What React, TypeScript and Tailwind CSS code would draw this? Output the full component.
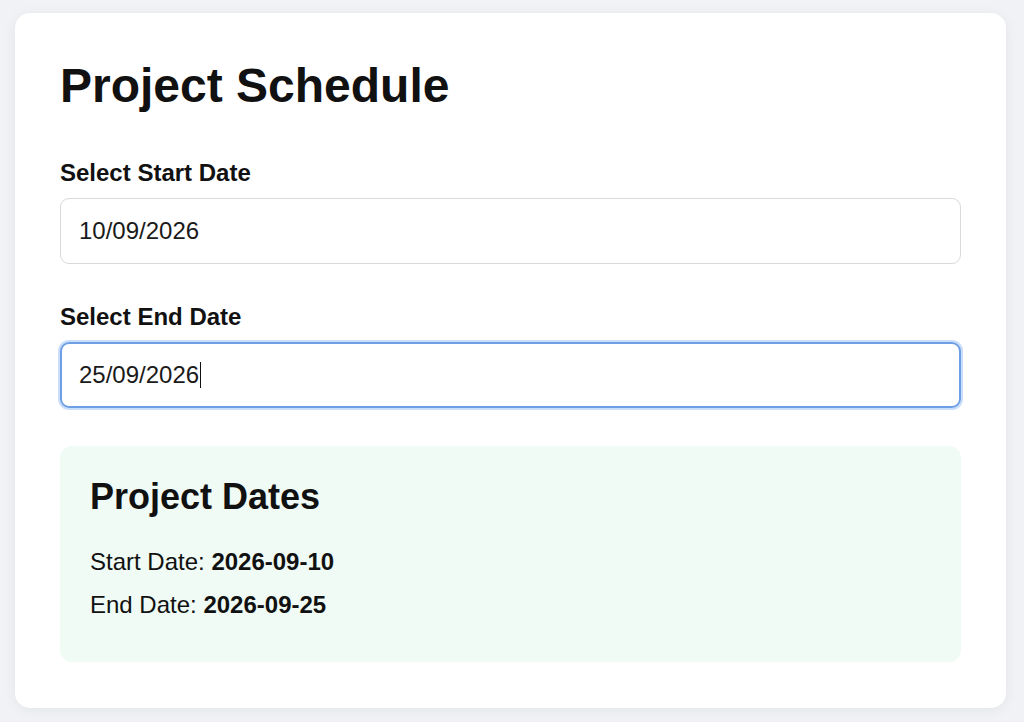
export default function App() {
  return (
    <div className="min-h-[722px] bg-[#f0f2f5] pt-[13px] pb-[14px] font-['Liberation_Sans',Arial,sans-serif] text-[#111]">
      <div className="ml-[15px] w-[991px] rounded-[15px] bg-white px-[45px] pt-[45px] pb-[46px] shadow-[0_2px_14px_rgba(0,0,0,0.06)]">
        <h1 className="mb-[46px] text-[48px] font-bold leading-[55px]">Project Schedule</h1>

        <label className="mb-[12px] block text-[24px] font-bold leading-[27px]">Select Start Date</label>
        <div className="flex h-[66px] items-center rounded-[9px] border-[1.5px] border-[#d9d9d9] px-[18px] text-[24px] text-[#1a1a1a]">
          10/09/2026
        </div>

        <label className="mt-[39px] mb-[12px] block text-[24px] font-bold leading-[27px]">Select End Date</label>
        <div className="flex h-[66px] items-center rounded-[9px] border-2 border-[#6e9ee3] px-[17px] text-[24px] text-[#1a1a1a] shadow-[0_0_0_2px_#c9defa]">
          25/09/2026
          <span className="ml-[1px] inline-block h-[26px] w-[1px] bg-[#111]" />
        </div>

        <div className="mt-[38px] rounded-[12px] bg-[#effbf4] px-[30px] pt-[30px] pb-[43px]">
          <h3 className="mb-[31px] text-[36px] font-bold leading-[41px]">Project Dates</h3>
          <p className="text-[24px] leading-[28px]">
            Start Date: <strong>2026-09-10</strong>
          </p>
          <p className="mt-[15px] text-[24px] leading-[28px]">
            End Date: <strong>2026-09-25</strong>
          </p>
        </div>
      </div>
    </div>
  );
}
